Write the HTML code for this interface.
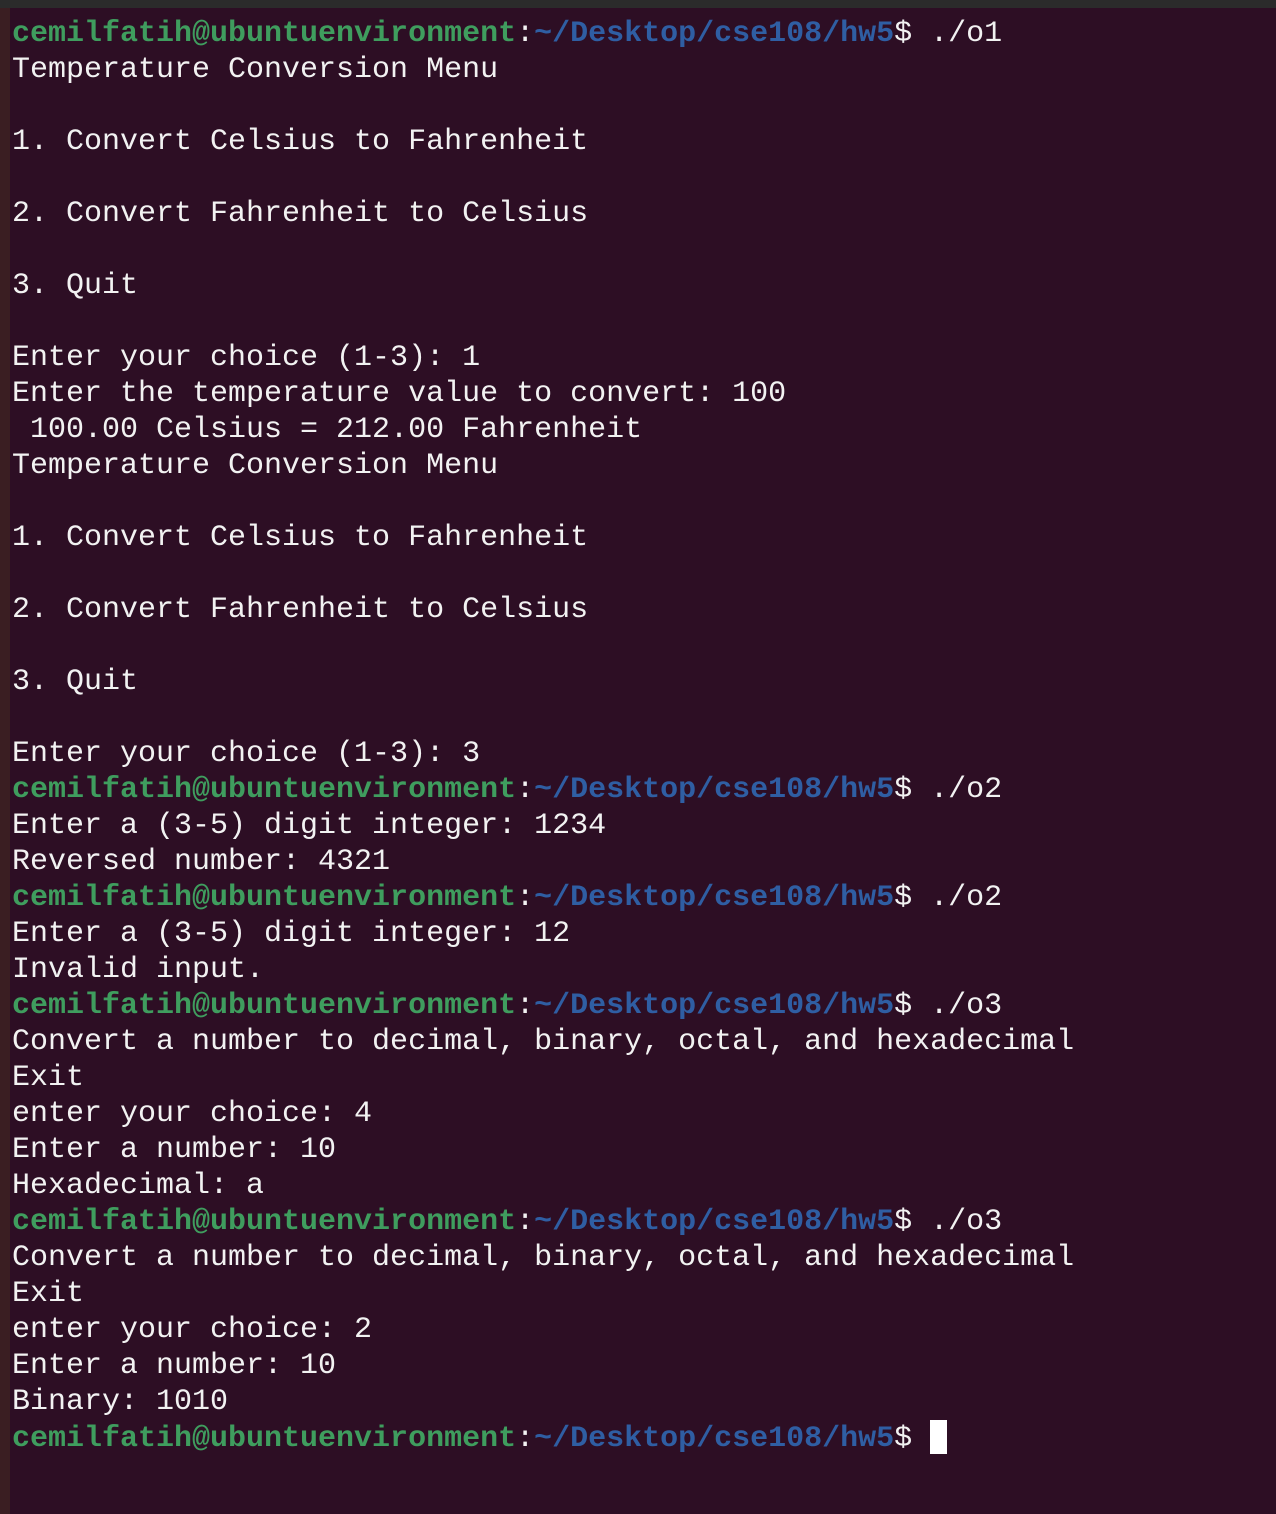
<!DOCTYPE html>
<html><head><meta charset="utf-8"><style>
html,body{margin:0;padding:0;}
body{width:1276px;height:1514px;background:#2d0e24;position:relative;overflow:hidden;}
.top{position:absolute;left:0;top:0;width:1276px;height:8px;background:#2b2b2b;}
.left{position:absolute;left:0;top:8px;width:10px;height:1506px;background:#3a1e22;}
pre{position:absolute;left:12px;top:16px;margin:0;font-family:"Liberation Mono",monospace;font-size:30px;line-height:36px;color:#f2f2f2;letter-spacing:0;}
.g{color:#3f9d5e;font-weight:bold;}
.b{color:#2f5ea3;font-weight:bold;}
.cur{display:inline-block;width:17px;height:34px;background:#fff;vertical-align:-8px;}
</style></head><body>
<div class="top"></div><div class="left"></div>
<pre><span class="g">cemilfatih@ubuntuenvironment</span>:<span class="b">~/Desktop/cse108/hw5</span>$ ./o1
Temperature Conversion Menu

1. Convert Celsius to Fahrenheit

2. Convert Fahrenheit to Celsius

3. Quit

Enter your choice (1-3): 1
Enter the temperature value to convert: 100
 100.00 Celsius = 212.00 Fahrenheit
Temperature Conversion Menu

1. Convert Celsius to Fahrenheit

2. Convert Fahrenheit to Celsius

3. Quit

Enter your choice (1-3): 3
<span class="g">cemilfatih@ubuntuenvironment</span>:<span class="b">~/Desktop/cse108/hw5</span>$ ./o2
Enter a (3-5) digit integer: 1234
Reversed number: 4321
<span class="g">cemilfatih@ubuntuenvironment</span>:<span class="b">~/Desktop/cse108/hw5</span>$ ./o2
Enter a (3-5) digit integer: 12
Invalid input.
<span class="g">cemilfatih@ubuntuenvironment</span>:<span class="b">~/Desktop/cse108/hw5</span>$ ./o3
Convert a number to decimal, binary, octal, and hexadecimal
Exit
enter your choice: 4
Enter a number: 10
Hexadecimal: a
<span class="g">cemilfatih@ubuntuenvironment</span>:<span class="b">~/Desktop/cse108/hw5</span>$ ./o3
Convert a number to decimal, binary, octal, and hexadecimal
Exit
enter your choice: 2
Enter a number: 10
Binary: 1010
<span class="g">cemilfatih@ubuntuenvironment</span>:<span class="b">~/Desktop/cse108/hw5</span>$ <span class="cur"></span></pre>
</body></html>
